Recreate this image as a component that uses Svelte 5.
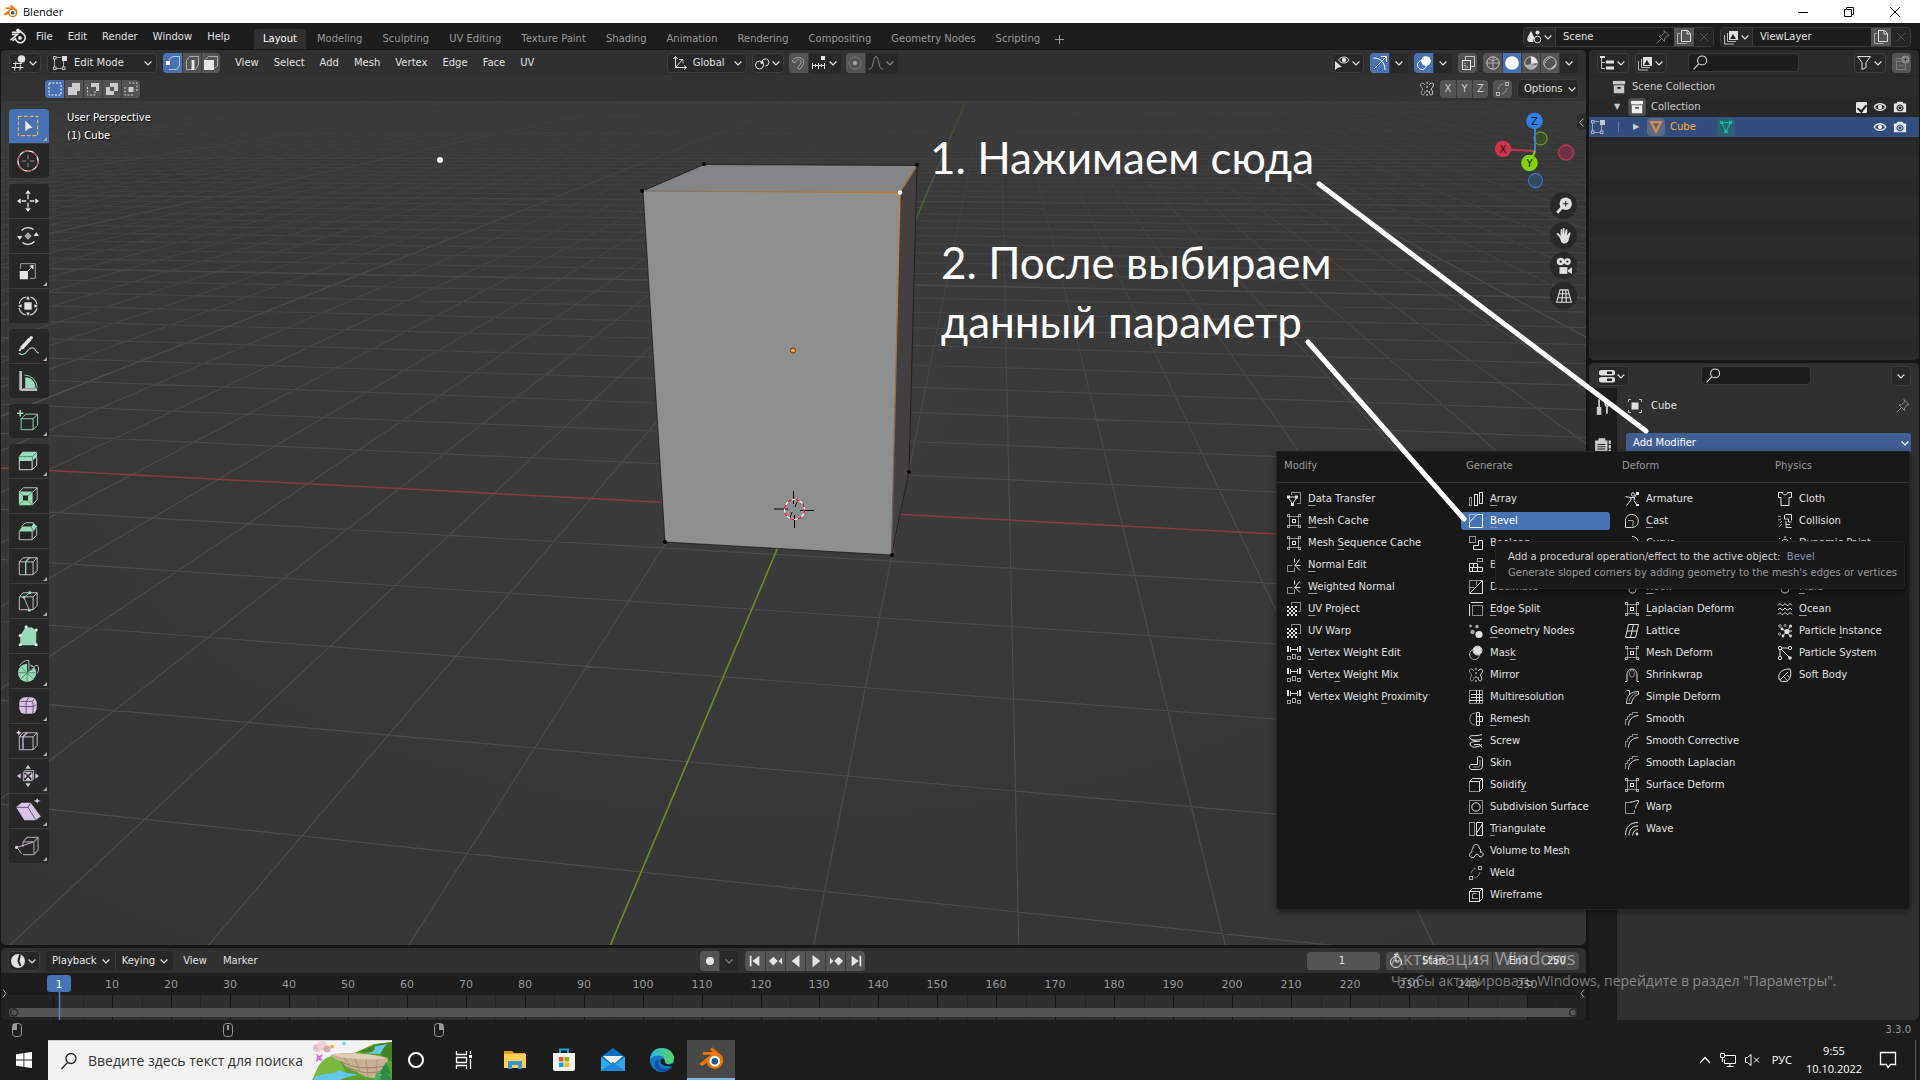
<script>
    // 16px icons, stroke is currentColor, dim parts use opacity
    const sq    = (x, y, w, h = w, o = 1) => `<rect x="${x}" y="${y}" width="${w}" height="${h}" opacity="${o}"/>`;
    const fsq   = (x, y, w, h = w, o = 1) => `<rect x="${x}" y="${y}" width="${w}" height="${h}" opacity="${o}" fill="currentColor" stroke="none"/>`;
    const p     = (d, o = 1) => `<path d="${d}" opacity="${o}"/>`;
    const fp    = (d, o = 1) => `<path d="${d}" opacity="${o}" fill="currentColor" stroke="none"/>`;
    const c     = (x, y, r, o = 1) => `<circle cx="${x}" cy="${y}" r="${r}" opacity="${o}"/>`;
    const fc    = (x, y, r, o = 1) => `<circle cx="${x}" cy="${y}" r="${r}" opacity="${o}" fill="currentColor" stroke="none"/>`;

    const lattice = sq(3.5, 3.5, 9, 9, .6) + sq(1.5, 1.5, 2, 2, .7) + sq(12.5, 1.5, 2, 2, .7) + sq(1.5, 12.5, 2, 2, .7) + sq(12.5, 12.5, 2, 2, .7) + sq(6.5, 6.5, 3);
    const normal  = p('M1.5 8.5v6h7v-4M1.5 8.5h5', .6) + p('M8.5 8.5h6M13.5 2.5 9 8.5l5 5M8.500 1.500v4');
    const uv      = p('M5.5 3.5v-2h9v9h-2', .6) + [0, 1, 2, 3, 4].map(r => [0, 1, 2, 3, 4].filter(k => (k + r) % 2 === 0).map(k => fsq(1 + k * 2, 5 + r * 2, 2)).join('')).join('');
    const weight  = p('M4 4.5h8') + fsq(1, 1, 2, 6) + fsq(4, 2, 1, 5) + fsq(13, 1, 2, 6) + fsq(11, 2, 1, 5) + sq(1.5, 11.5, 3, 3, .7) + sq(6.5, 9.5, 3, 4, .7) + sq(11.5, 11.5, 3, 3, .7);
    const smooth  = p('M1.5 14V8.5h2v-3h2v-2h3v-2H14', .6) + p('M4.5 14.5C4.5 9 8 5 14.5 4.5');
    const merge   = sq(10.5, 1.5, 3, 3, .8) + sq(1.5, 11.5, 3, 3, .8) + p('M3 8.5C4 5 6 3 8 3M7 13c3-1 4-3 5-6', .5);

    const icons = {
        data:      p('M5.5 4V1.5h9v11H11', .6) + p('M2 6h9L6.5 13z') + sq(1.5, 5, 2) + sq(9.5, 5, 2) + fsq(5, 12, 3),
        lattice, normal, uv, weight, smooth,
        array:     sq(1.5, 6.5, 2, 8, .6) + sq(6.5, 3.5, 3, 11) + sq(11.5, 1.5, 3, 11),
        bevel:     p('M1.5 8V1.5H8', .5) + p('M1.5 14.5h13v-13H9L1.5 9z'),
        boolean:   sq(1.5, 1.5, 6, 6, .6) + p('M10.5 5.5h4v9h-9v-4h5z'),
        build:     sq(9.5, 1.5, 5, 3, .7) + p('M1.5 6.5h8v8h-8zM1.5 10.5h13v4h-13M5.5 6.5v4M9.5 10.5v4M4.5 10.5v4'),
        decimate:  p('M1.5 14V1.5H14M1.5 8.5H6M8.5 2v4', .6) + p('M14.5 1.5v13h-13z'),
        edge:      p('M4.5 4.5h10v10h-10z', .6) + p('M3 1.5h12M1.5 3v12'),
        geo:       fc(11, 11.5, 3.6) + fc(4.5, 9, 2.2, .7) + fc(9, 3.5, 1.8, .7) + fc(2.5, 3, 1.5, .6),
        mask:      c(6.5, 9.5, 5, .7) + fc(9.5, 5.5, 4) + c(9.5, 5.5, 4.5),
        mirror:    p('M6 4C4 1 1 2 1.5 4c.3 2 1.5 3 2.5 4-2 2-2.5 6 0 6 1 0 2-2 2-4', .6) + p('M10 4c2-3 5-2 4.5 0-.3 2-1.5 3-2.5 4 2 2 2.5 6 0 6-1 0-2-2-2-4') + p('M8 1v14').replace('/>', ' stroke-dasharray="2 2"/>'),
        multires:  sq(1.5, 1.5, 13, 13, .6) + p('M8.5 1v13M11.5 1v13M1 11.5h14M3 8.5h11M3 5.5h11'),
        remesh:    p('M7 2C0 2 0 14 7 14', .6) + p('M8.5 1.5h3v13h-3zM8.5 5.5h6v5h-6'),
        screw:     p('M1.5 4.5C2 1 7 4 14 1.5M14 6C8 8 2 7 1.5 4.5c0 0 1 3 8 3.5M14 11.5c-5 4-12 3-12-.5 0-3 6-2 10-3M6 11.5h6l2 3'),
        skin:      p('M9.5 2c4-1 5 1 5 3v6c0 3-2 3.5-4 3.5H4c-3 0-4-5 0-5h5.5z') + p('M12 5v5c0 2-1 2-3 2H5', .6),
        solidify:  sq(1.5, 4.5, 10, 10, .6) + p('M1.5 4.5l3-3h10v10l-3 3v-10h-10M11.5 4.5l3-3'),
        subdiv:    sq(1.5, 1.5, 13, 13, .6) + c(8, 8, 4.2),
        triang:    sq(1.5, 1.5, 5, 13, .6) + p('M8.5 1.5h6v13h-6zM8.5 12l6-9'),
        volume:    p('M5 14.5c-5 0-4-5-1-5.5-1-2 1-3 1-4 0-5 7-4 6 0 2 1 2 3 1 4 4 0 4 4 1 5-3 0-2-3-4-3s-2 3.5-4 3.5z'),
        merge,
        wire:      sq(1.5, 4.5, 10, 10) + p('M1.5 4.5l3-3h10v10l-3 3M11.5 4.5l3-3') + p('M4.5 7v5M4 11.5h6M4.5 6.5h4', .7),
        armature:  c(9, 3.5, 1.7) + p('M1.5 5.5l5 1 4 0 2.5-4M7 6v3L2.5 14.5M10.5 6.5 10 9.5l3 5') + fsq(12, 1, 3) + fsq(12, 13, 3, 2),
        cast:      p('M2.5 14.5h5c9 0 9-13 0-13-4 0-6 3-6 6v7z') + p('M4 7.5h5v6', .7),
        curve:     p('M8 1.5c8 0 8 11 0 12H2'),
        hook:      p('M6 9c-4 5 6 8 6 1 0-3-4-3-4-8', 1),
        grid:      p('M4.5 1.5h10l-3 13h-10zM3 8h10.5M9.5 1.5l-3 13'),
        shrink:    p('M1 14.5h2V8c0-8 10-8 10 0v6.5h2') + p('M6 8.5a2.5 3.5 0 1 1 4 0c0 2-4 2-4 0', .6),
        simple:    p('M2.5 1.5h3v4c2-2 5-3 9-3v3c-4 1-6 4-7 9h-5c0-5 2-8 3-9', .9) + p('M5 12C6 8 9 5 13 4', .6),
        warp:      p('M7 3.5H1.5v11h9V11', .6) + p('M6 3c3 1 5-2 8.5-1.5.5 3-3 4-3 8'),
        wave:      p('M1.5 14C1.5 6 6 1.5 14 1.5M5 14.5C5 9 8 5 14 5M8.5 14.5C9 11 11 8.5 14 8.5') + fc(13, 13, 1.4),
        cloth:     p('M5.5 1.5c0 3 5 3 5 0h4v5h-2.5v8h-8v-8H1.5v-5z'),
        collision: p('M8.5 1.5h6v6M7.5 2v4h4v3h3M9 8v6.5h5.5M9 11.5h4') + p('M1 3l3 1M1 7l3-.5M3 10l2-2M2 14l3-3', .7),
        paint:     c(8, 9, 4.5) + fc(8, 10, 2) + p('M2 3l1 1M8 1v2M14 3l-1 1'),
        fluid:     p('M8 2C3 8 3 14 8 14s5-6 0-12z'),
        ocean:     [3.5, 8, 12.5].map(y => p(`M1 ${y + 1}l2-2 2 2h1l2-2 2 2h1l2-2 2 2`)).join(''),
        pinst:     fc(10, 8.5, 2.6) + fc(13.5, 3, 1.5) + fc(5, 6, 1.4) + fc(6, 13, 1.4) + fc(13.5, 13, 1.4) + p('M10 8l4-5M10 8H15M10 9l3 4M9 9l-3 4M9 8 5 6') + c(3, 3, 1.3, .7) + c(2.5, 11, 1.2, .7) + c(8, 2.5, 1, .7),
        psys:      c(3, 3, 1.7) + c(13, 3, 1.7) + c(3, 13, 1.7) + fc(13, 13, 1.8) + p('M5 3h6M3 5v6M4 4l8 8'),
        soft:      p('M3 13.5C0 10 2 1.5 13 2c2 5 0 12-4 12.5-3 0-5 0-6-1zM3 13 11 5') + p('M10 8l3 3M7 10l4 4', .8),

        chev:      p('M3.5 6 8 10.500l4.500-4.500').replace('/>', ' stroke-width="1.600"/>'),
        search:    c(9.5, 6, 4.2) + p('M6.5 9 1.5 14.5'),
        view3d:    p('M2 8.5h9M0.5 12.5h12M5 6.5l-1.5 9M9.5 9.5l-.5 6') + fc(10.5, 4, 3.8),
        edit:      sq(1.5, 1.5, 2.5, 2.5, .8) + sq(1.5, 12, 2.5, 2.5, .8) + sq(10.5, 12, 2.5, 2.5, .8) + p('M2.5 4v8M4 2.5h5M4 13.5h6M11.5 6v6', .7) + fsq(10, 1, 5),
        vsel:      p('M4.5 5.5V4l3-2.500h7v9l-3 4H4', .6) + fsq(1, 6, 4),
        esel:      p('M2.5 5.5l3-4h9v8.5l-3 4.5h-9z', .6) + fsq(7.5, 5, 3, 10),
        fsel:      p('M2.5 4.5l3-3h9v9l-3 3', .6) + fsq(1, 5, 10, 10),
        s1:        sq(2, 2, 12).replace('/>', ' stroke-dasharray="2 1.500"/>'),
        s2:        fp('M6 2h8v8h-3v4H2V6h4z'),
        s3:        fp('M6 2h8v8h-3V6H6z') + p('M2.5 6v8H10v-4').replace('/>', ' stroke-dasharray="2 1.500"/>'),
        s4:        fp('M6 2h8v8h-4v4H2V6h4zM6 6v4h4V6z').replace('/>', ' fill-rule="evenodd"/>'),
        s5:        fsq(5.5, 6, 5) + p('M6 2h8v8M2 6v8h8').replace('/>', ' stroke-dasharray="2 1.500"/>'),
        axes:      p('M3.5 13V2M1.5 4l2-2.5 2 2.5M3 12.5h11M12 10.5l2.5 2-2.5 2M4 12l6-7') + p('M7 4.5h4v4', .8),
        pivot:     c(5.5, 10, 4) + p('M8 6a3.6 3.6 0 1 1 3.5 5') + fc(8, 7.5, 1.5),
        snap:      p('M2 6.5C6-1 16 3 13.5 9L10 14.5 7.5 13 11 8C12 4 7 3 5 8z', .9),
        ticks:     p('M1 10.5h13M1.5 8v6M4.5 9v3M7.5 8v6M10.5 9v3M13.5 8v6') + fsq(10, 1, 4),
        prop:      c(8, 8, 6, .4) + fc(8, 8, 2),
        bell:      p('M1 14.5C6 14 5 1.5 8 1.5s2 12.500 7 13'),
        eyesel:    p('M4.5 5C7 1 13 1 15 5c-2 4-8 4-10.5 0z') + fc(10, 5, 2.2) + fp('M1 6v9l3-2.5 4-.5z'),
        gizmo:     p('M2 14 14 2M9 1.5h5.5V7M1.5 3C9 3 13 8 13 15'),
        overlay:   c(6, 10, 4.5) + fc(10, 6, 4.8),
        xray:      sq(2.5, 5.5, 8, 9) + p('M5.5 5V1.5h9v10H11', .8) + p('M5 8v4h3').replace('/>', ' stroke-dasharray="1 1"/>'),
        wiresh:    c(8, 8, 6.2, .8) + p('M2 8h12M8 2v12M4 4c3 2 5 2 8 0', .6),
        solid:     fc(8, 8, 6.8),
        matsh:     c(8, 8, 6.2, .8) + fp('M8 1.5A6.5 6.5 0 0 1 14.5 8L8 9z') + fp('M8 9l6 1c-2 5-9 5-12 0z', .6),
        rendsh:    c(8, 8, 6.2, .8) + fp('M8 14a6 6 0 0 0 6-6c-2 3-3 4-6 6z') + p('M3.5 8A4.5 4.5 0 0 1 8 3.5', .6),
        scene:     fc(11.5, 3.5, 2) + fp('M5 2l3.5 7c-.5 1-1 1-1 4H3C0 11 1 9 5 2z') + c(11.5, 10.5, 3.3),
        layer:     fsq(6, 2, 9, 9) + p('M4.5 4v8.5H13M1.5 6v9H11', .8) + '<path d="M7 10l3-5 3 5z" fill="#222" stroke="none"/>',
        pin:       p('M9 1.5l5 5-2 .5-2.5 3 0 2.5L4 7l2.5-.3L9.5 4zM6 10l-4.5 4.5'),
        copy:      p('M5.5 1.5h6l3 3v8h-9zM11 2v3h3') + p('M4 4.5H1.5v10h9V14', .6),
        cross:     p('M4 4l8 8M12 4l-8 8'),
        outliner:  p('M2.5 1v12.500H6M2.5 7.5H6', .8) + fsq(1, 1, 5, 2) + fsq(7, 5.5, 8, 3) + fsq(7, 11.5, 8, 3),
        filter:    p('M1.5 1.5h13L10 7.5v5l-4 2v-7z'),
        newcol:    sq(2.5, 6.5, 9, 8, .7) + p('M2 5.5V3.5h6M5 10.5h4', .7) + fc(11.5, 4.5, 4) + '<path d="M9.500 4.500h4M11.500 2.500v4" stroke="#444"/>',
        coll:      fsq(1, 1, 14, 4) + fp('M2 6h12v9H2zM6 8v2h4V8z').replace('/>', ' fill-rule="evenodd"/>'),
        tri:       p('M2.5 2.5h11L8 13.5z').replace('/>', ' stroke-width="2.600"/>'),
        mesh:      p('M3 3h10L8 13z') + sq(1.5, 1.5, 2.5) + sq(12, 1.5, 2.5) + sq(6.8, 12, 2.5),
        eye:       p('M1.5 8C4 3 12 3 14.5 8 12 13 4 13 1.5 8z').replace('/>', ' stroke-width="1.600"/>') + fc(8, 8, 2.5),
        cam:       fp('M1 4h3l1-2h6l1 2h3v10H1zM8 5a4 4 0 1 0 .01 0z').replace('/>', ' fill-rule="evenodd"/>') + c(8, 9, 2.2),
        props:     fp('M3 2h10a3 2.500 0 0 1 0 5.500H3A3 2.500 0 0 1 3 2zM3 9h10a3 2.500 0 0 1 0 5.500H3A3 2.500 0 0 1 3 9z') + '<path d="M8 4.700h5M8 11.700h5" stroke="#222" stroke-width="2.500"/>',
        object:    fsq(4.5, 4.5, 7) + p('M1.5 4V1.5H4M12 1.5h2.5V4M14.5 12v2.5H12M4 14.5H1.5V12', .8),
        tool:      p('M4.5 1v7M10 2v4l1.5 2 1.5-2V2M11.500 8v6').replace('/>', ' stroke-width="1.600"/>') + fsq(2.5, 8, 4, 7),
        render:    fp('M1 4h3V2h6v2h2v11H1zM13 4h2v3h-2zM13 8h2v3h-2zM13 12h2v3h-2z') + '<path d="M3 7.500h7M3 9.500h7M3 11.500h7" stroke="#222"/>',
        time:      fc(8, 8, 7) + '<path d="M10 1.500 8.500 8l2 5" stroke="#222" stroke-width="2"/>',
        rec:       fc(8, 8, 4),
        first:     fsq(2, 2, 2, 12) + fp('M13 2v12L5 8z'),
        prevk:     fp('M15 4v8l-4-4zM0 8l5-5 5 5-5 5z'),
        rev:       fp('M12 1v14L3 8z'),
        play:      fp('M4 1v14l9-7z'),
        nextk:     fp('M1 4v8l4-4zM6 8l5-5 5 5-5 5z'),
        last:      fsq(12, 2, 2, 12) + fp('M3 2v12l8-6z'),
        clock:     c(8, 9, 5.5) + p('M8 9V5M6 1.5h4M8 1v2M8 9h3'),
        zoom:      fc(9.5, 6, 5.5) + p('M6 9.5 2 14').replace('/>', ' stroke-width="2.500"/>') + '<path d="M7 6h5M9.500 3.500v5" stroke="#222"/>',
        hand:      fp('M4 9 1.5 6.5c0-1.5 1-1.5 2-.5L5 8V2.5c0-1 1.5-1 1.5 0V7l.5-5.5c.2-1 1.5-1 1.5 0V7L9.5 2.5c.5-1 1.5-.5 1.5.5L10.7 7.5 12.5 5c1-1 1.5 0 1.3.8L12 12c-1 3-5 3.5-6.5 1z'),
        camera:    fc(5, 4, 3.4) + fc(11, 4, 3) + fsq(4, 9, 7, 6) + fp('M11.5 11.5 15 9v6l-3.5-2z') + '<circle cx="5" cy="4" r="1" fill="#222" stroke="none"/><circle cx="11" cy="4" r="1" fill="#222" stroke="none"/>',
        persp:     p('M4.5 2.5h7l3 11h-13zM3.5 6h9M2.5 9.5h11M7 2.5 6 13.5M9.5 2.5l.5 11'),
        mouseL:    sq(3.5, 1.5, 9, 13).replace('/>', ' rx="3"/>') + fp('M4 2h4v6H4z'),
        mouseM:    sq(3.5, 1.5, 9, 13).replace('/>', ' rx="3"/>') + fsq(7, 3, 2, 5),
        mouseR:    sq(3.5, 1.5, 9, 13).replace('/>', ' rx="3"/>') + fp('M8 2h4v6H8z'),
    };

    // toolbar icons, 24px; g = green, m = mauve
    const g = '#96dbb5', m = '#d8c2e8', w = '#e6e6e6';
    const ln   = (d, col = w, sw = 1) => `<path d="${d}" fill="none" stroke="${col}" stroke-width="${sw}"/>`;
    const fl   = (d, col = w) => `<path d="${d}" fill="${col}"/>`;
    const box  = (col = '#ccc') => ln('M2.5 7.5h15v14h-15zM2.5 7.5l4-4.5h15.5l-4.5 4.5M22 3v14l-4.5 4.5', col);
    const dot  = (x, y, r, col) => `<circle cx="${x}" cy="${y}" r="${r}" fill="${col}"/>`;
    const arrows = (col) => fl('M12 0l3 4H9zM12 24l3-4H9zM0 12l4-3v6zM24 12l-4-3v6z', col);

    const tools = [
        [
            { n: 'Select Box', on: true, more: true, s: '<rect x="1.500" y="1.500" width="21" height="21" fill="none" stroke="#ffb040" stroke-width="1.200" stroke-dasharray="4 2.200"/>' + fl('M9 6v12l3-3 5-1z') },
            { n: 'Cursor', s: '<circle cx="12" cy="12" r="11" fill="none" stroke="#e6e6e6" stroke-width="1.400"/><circle cx="12" cy="12" r="11" fill="none" stroke="#b8404a" stroke-width="1.400" stroke-dasharray="6.500 5"/>' + ln('M12 5v5M12 14v5M5 12h5M14 12h5', '#999') },
        ],
        [
            { n: 'Move', s: arrows(w) + ln('M12 5v5M12 14v5M5 12h5M14 12h5', w, 1.4) },
            { n: 'Rotate', s: ln('M5 6a9.5 9.5 0 0 1 13-1M19 18a9.5 9.5 0 0 1-13 1', w, 1.4) + fl('M0 12h6l-3 4zM24 12h-6l3-4z') + fl('M12 8l4 4-4 4-4-4z', '#aaa') },
            { n: 'Scale', more: true, s: ln('M4 10V4h16v16h-6', '#aaa') + `<rect x="3" y="12" width="9" height="9" fill="${w}"/>` + ln('M12 12l5-5') + fl('M18 5.5v5l-4.5-4.5z') },
            { n: 'Transform', s: '<circle cx="12" cy="12" r="10" fill="none" stroke="#ccc" stroke-width="1.300" stroke-dasharray="11 4.700" stroke-dashoffset="-2.500"/><rect x="8" y="8" width="8" height="8" fill="#e6e6e6"/>' + fl('M12 1l2 4h-4zM12 23l2-4h-4zM1 12l4-2v4zM23 12l-4-2v4z') },
        ],
        [
            { n: 'Annotate', more: true, s: ln('M2 20c8 5 9-7 15-6 4 1 3 5 7 6', g, 1.2) + ln('M2.5 17.5 5 14', w, 2) + ln('M5 14.5 14.5 4', w, 4) + dot(15.5, 3, 1.8, w) },
            { n: 'Measure', s: fl('M9 20V8a11 11 0 0 1 11 12z', g) + ln('M8 5.5a14 14 0 0 1 14 14', g) + ln('M4 1v21', '#bbb', 3) + ln('M4 21.5h18', '#bbb', 3) + ln('M6 2v19', '#282828', 1).replace('/>', ' stroke-dasharray="1 1.500"/>') },
        ],
        [
            { n: 'Add Cube', more: true, s: ln('M4.5 9.5h13v12h-13zM4.5 9.5l5-5h13l-5 5M22.5 4.5v12l-5 5', g) + ln('M3.5 0v7M0 3.5h7', g, 1.8) },
        ],
        [
            { n: 'Extrude Region', more: true, s: ln('M2.5 12v9.500h14V12M16.5 21.5l5-5V8', w) + fl('M2 7l4-5h16l-5 5v5H2zM17 7l5-5v5l-5 5z', g) + ln('M2 7h15l5-5M17 7v5', '#4f8a69') },
            { n: 'Inset Faces', s: ln('M2.5 7.5 7 3h15v13l-5 5.5M17.5 7.5 22 3', '#ccc') + fl('M2 7h15v15H2zM6.5 11.5v5.500H12v-5.500z', g).replace('/>', ' fill-rule="evenodd"/>') + ln('M2 7l5 5M17 7l-5 5M2 22l5-5M17 22l-5-5', '#4f8a69') },
            { n: 'Bevel', s: ln('M2.5 12.5v9h14v-9M16.5 21.5l5-5V9M5 7l4-4h9', '#ccc') + fl('M2 12.5 5.5 7H16l2-4 4 4-4 5.5z', g) + ln('M5.5 7H15l3 5', '#4f8a69') },
            { n: 'Loop Cut', more: true, s: box() + ln('M9.5 21.5v-14L13.5 3', g, 1.4) },
            { n: 'Knife', more: true, s: box() + ln('M14 3 7.5 8 13.5 22', g) + dot(14, 3, 1.6, g) + dot(7.5, 8, 1.6, g) + dot(13.5, 22, 1.6, g) },
            { n: 'Poly Build', s: fl('M3.5 22V11.5L9 3l7-.5 5 3.5v16z', g) + dot(10, 2, 1.7, w) + dot(21, 5.5, 1.7, w) + dot(3.5, 11.5, 1.7, w) + dot(3.5, 21.5, 1.7, w) + dot(21, 21.5, 1.7, w) },
            { n: 'Spin', more: true, s: dot(11, 14, 10, g) + fl('M11 14V3h3l1 4 5 1z', '#272727') + ln('M3 6c2-4 7-6 10-5.500v11M17 11c2-6 7-8 6.500 0-.5 2-1 3-2 4', '#ccc') + ln('M11 14H1M11 14h10M11 14v10M11 14l-7-7M11 14l-7 7M11 14l7 7M11 14l7-6', '#4f8a69') },
            { n: 'Smooth', more: true, s: '<rect x="2.500" y="2.500" width="19" height="18" rx="6" fill="#d8c2e8"/>' + ln('M3 12.5h15l3-2M10 7v13M4 7h13c1 4 1 9 0 13M17 7l2-3M10 7l3-4', '#5c4a6b') },
            { n: 'Edge Slide', more: true, s: box() + ln('M6.5 21V7.5L11 3', m, 1.4) + fl('M2 0l1 2 2 1-2 1-1 2-1-2-2-1 2-1z', m) },
            { n: 'Shrink/Fatten', more: true, s: ln('M7 8h9v9H7zM7 8l2-2h9v9l-2 2', '#999', 1.3) + arrows(m) + fl('M12 11l-3-3h6zM12 13l-3 4h6zM11 12l-3-3v6zM13 12l4-3v6z', m) },
            { n: 'Shear', more: true, s: fl('M-1 8l6-5h10l11 15-6 4H8z', m) + ln('M-1 8h13l8 13M12 8l3-5', '#5c4a6b') + fl('M22-2l1 2 3 1-3 1-1 2-1-2-3-1 3-1z', m) },
            { n: 'Rip Region', more: true, s: ln('M6.5 7.5h12v14h-12M6.5 13V7.5l4.5-5h12v14l-4.5 5M18.5 7.5l4.5-5', '#999', 1.3) + ln('M0 13.5 17 8M0 13.5l5 7', m) + dot(-.5, 13.5, 1.7, m) },
        ],
    ];

    // '_' marks the underlined letter
    const columns = [
        { title: 'Modify', items: [
            ['data', '_Data Transfer'], ['lattice', '_Mesh Cache'], ['lattice', 'Mesh _Sequence Cache'],
            ['normal', '_Normal Edit'], ['normal', '_Weighted Normal'], ['uv', '_UV Project'], ['uv', 'UV Warp'],
            ['weight', '_Vertex Weight Edit'], ['weight', 'Verte_x Weight Mix'], ['weight', 'Vertex Weight _Proximity'] ] },
        { title: 'Generate', items: [
            ['array', '_Array'], ['bevel', '_Bevel'], ['boolean', 'Boolean'], ['build', 'Build'], ['decimate', 'Decimate'],
            ['edge', '_Edge Split'], ['geo', '_Geometry Nodes'], ['mask', 'Mas_k'], ['mirror', 'Mirror'],
            ['multires', 'Multiresolution'], ['remesh', '_Remesh'], ['screw', 'Screw'], ['skin', 'Skin'],
            ['solidify', 'Solidif_y'], ['subdiv', 'Subdivision Surface'], ['triang', '_Triangulate'],
            ['volume', 'Volume to Mesh'], ['merge', 'Weld'], ['wire', 'Wireframe'] ] },
        { title: 'Deform', items: [
            ['armature', 'Armature'], ['cast', '_Cast'], ['curve', 'Curve'], ['lattice', 'Displace'], ['hook', '_Hook'],
            ['lattice', '_Laplacian Deform'], ['grid', 'Lattice'], ['lattice', 'Mesh Deform'], ['shrink', 'Shrinkwrap'],
            ['simple', 'Simple Deform'], ['smooth', 'Smooth'], ['smooth', 'Smooth Corrective'],
            ['smooth', 'Smooth Laplacian'], ['lattice', 'Surface Deform'], ['warp', 'Warp'], ['wave', 'Wave'] ] },
        { title: 'Physics', items: [
            ['cloth', 'Cloth'], ['collision', 'Collision'], ['paint', 'Dynamic Paint'], ['pinst', 'Explode'],
            ['fluid', '_Fluid'], ['ocean', '_Ocean'], ['pinst', 'Particle _Instance'], ['psys', 'Particle System'],
            ['soft', 'Soft Body'] ] },
    ];

    const tabs = ['Layout', 'Modeling', 'Sculpting', 'UV Editing', 'Texture Paint', 'Shading', 'Animation', 'Rendering', 'Compositing', 'Geometry Nodes', 'Scripting'];

    // floor grid: origin plus the two vanishing points of the X and Y axes
    const O = [793, 509], VX = [-6162, 150], VY = [998, 22];
    const A = 1 / 66.5, B = 1 / 11.707;
    function project(u, v) {
        const k = 1 + A * u + B * v;
        return [0, 1].map(i => ((O[i] + A * u * VX[i] + B * v * VY[i]) / k).toFixed(1));
    }
    function seg(a, b) { return 'M' + project(...a).join(' ') + 'L' + project(...b).join(' '); }
    const grid = [], major = [];
    for (let n = -50; n <= 60; n++) {
        if (n === 0) continue;
        const near = (.25 - 1 - A * n) / B;
        (n % 10 ? grid : major).push(seg([n, near], [n, 200]));
    }
    for (let n = -8; n <= 70; n++) {
        if (n === 0) continue;
        const right = Math.max(-60, (.1 - 1 - B * n) / A);
        (n % 10 ? grid : major).push(seg([right, n], [90, n]));
    }

    const FRAME = 5.895;
    const frameX = f => Math.round(58 + (f - 1) * FRAME);
    const marks = Array.from({ length: 52 }, (_, i) => i * 5);

    let current = $state(1), start = $state(1), end = $state(250);
    let tab = $state('Layout');
    let active = $state('Bevel');
</script>


{#snippet ic(name, size = 16)}
    <svg class="ic" width={size} height={size} viewBox="0 0 16 16" aria-hidden="true">{@html icons[name]}</svg>
{/snippet}

{#snippet drop(name, label)}
    <button class="drop" aria-label={label}>{@render ic(name)}{@render ic('chev', 12)}</button>
{/snippet}

{#snippet blender(size)}
    <svg width={size} height={size} viewBox="0 0 24 24" aria-hidden="true">
        <path d="M1 16.500 12 8H4.500V5.500h9L11 3l2-1.800 9 7.800a7.800 7.800 0 1 1-14 6.500l-4 3z" fill="#ea7600"/>
        <circle cx="15.500" cy="14" r="5" fill="#fff"/><circle cx="15.500" cy="14" r="3" fill="#265787"/>
    </svg>
{/snippet}


<div class="desktop">
    <header class="title">
        {@render blender(15)}
        <span>Blender</span>
        <div class="winbtns">
            <button aria-label="Minimize"><svg width="10" height="10"><path d="M0 5.500h10"/></svg></button>
            <button aria-label="Restore"><svg width="10" height="10"><path d="M.5 2.500h7v7h-7zM2.500 2V.5h7v7H8"/></svg></button>
            <button aria-label="Close"><svg width="10" height="10"><path d="M0 0l10 10M10 0 0 10"/></svg></button>
        </div>
    </header>

    <nav class="topbar">
        <svg class="logo" width="17" height="17" viewBox="0 0 24 24" aria-hidden="true">
            <path d="M2 17 12 9H4M4 6h10l-3-3 2-1 8 7a7 7 0 1 1-12 6l-4 3" fill="none" stroke="#e6e6e6" stroke-width="2.200"/><circle cx="15.500" cy="14" r="2.600" fill="#e6e6e6"/>
        </svg>
        <div class="menus">
            {#each ['File', 'Edit', 'Render', 'Window', 'Help'] as x}<button>{x}</button>{/each}
        </div>
        <div class="tabs">
            {#each tabs as t}<button class:on={t === tab} onclick={() => tab = t}>{t}</button>{/each}
            <button class="plus" aria-label="Add workspace"><svg width="9" height="9"><path d="M4.500 0v9M0 4.500h9" stroke="#999"/></svg></button>
        </div>
        <div class="ids">
            <div class="id">
                {@render drop('scene', 'Browse scene')}
                <input aria-label="Scene name" value="Scene">
                <span class="pin">{@render ic('pin')}</span>
                <button class="lt" aria-label="New scene">{@render ic('copy')}</button>
                <button class="x" aria-label="Delete scene">{@render ic('cross')}</button>
            </div>
            <div class="id">
                {@render drop('layer', 'Browse view layer')}
                <input aria-label="View layer name" value="ViewLayer">
                <button class="lt" aria-label="New view layer">{@render ic('copy')}</button>
                <button class="x" aria-label="Remove view layer">{@render ic('cross')}</button>
            </div>
        </div>
    </nav>

    <main>
        <div class="left">
            <section class="view3d">
                <svg class="scene" viewBox="0 50 1585 895" preserveAspectRatio="xMidYMid slice" aria-label="3D viewport">
                    <defs>
                        <radialGradient id="bg" cx=".5" cy=".4" r=".7"><stop offset="0" stop-color="#3d3d3d"/><stop offset="1" stop-color="#353535"/></radialGradient>
                        <linearGradient id="far" x1="0" y1="60" x2="0" y2="500" gradientUnits="userSpaceOnUse">
                            <stop offset="0" stop-color="#fff" stop-opacity="0"/><stop offset=".15" stop-color="#fff" stop-opacity=".2"/>
                            <stop offset=".5" stop-color="#fff" stop-opacity=".6"/><stop offset="1" stop-color="#fff"/>
                        </linearGradient>
                        <mask id="fade" maskUnits="userSpaceOnUse" x="0" y="50" width="1585" height="900"><rect y="50" width="1585" height="900" fill="url(#far)"/></mask>
                        <linearGradient id="edge" x1="642" y1="0" x2="899" y2="0" gradientUnits="userSpaceOnUse"><stop offset="0" stop-color="#777"/><stop offset="1" stop-color="#c87a1e"/></linearGradient>
                        <linearGradient id="edgeV" x1="0" y1="192" x2="0" y2="555" gradientUnits="userSpaceOnUse"><stop offset="0" stop-color="#d08a36"/><stop offset="1" stop-color="#6b5646"/></linearGradient>
                    </defs>
                    <rect y="50" width="1585" height="895" fill="url(#bg)"/>
                    <g mask="url(#fade)" fill="none">
                        <path d={grid.join('')} stroke="#4c4c4c" stroke-width="1.200"/>
                        <path d={major.join('')} stroke="#555" stroke-width="1.500"/>
                    </g>
                    <path d={seg([90, 0], [-60, 0])} stroke="#8c3844" stroke-width="1.500"/>
                    <g mask="url(#fade)"><path d={seg([0, -7], [0, 70])} stroke="#668f26" stroke-width="1.600"/></g>
                    <path d="M899 192.500 916 165.500 908 472 890.500 555z" fill="#444041"/>
                    <path d="M642 191 703 164.500 916 165.500 899 192.500z" fill="#848586"/>
                    <path d="M642 191 899 192.500 890.500 555 664 542z" fill="#8e9090"/>
                    <path d="M703 164.500 916 165.500M642 191 703 164.500M916 165.500 908 472 890.500 555 664 542 642 191" fill="none" stroke="#1c1c1c" stroke-width="1" opacity=".8"/>
                    <path d="M642 191 899 192.500" stroke="url(#edge)" stroke-width="1.300"/>
                    <path d="M899 192.500 890.500 555" stroke="url(#edgeV)" stroke-width="1.300"/>
                    <path d="M899 192.500 916 165.500" stroke="#a87038" stroke-width="1.300"/>
                    {#each [[641, 191], [703, 164], [916, 165], [908, 472], [891, 555], [664, 542]] as [x, y]}
                        <circle cx={x} cy={y} r="2" fill="#000"/>
                    {/each}
                    <circle cx="899" cy="192.500" r="2.200" fill="#fff"/>
                    <circle cx="792" cy="350.500" r="2.500" fill="#ffa030" stroke="#5a3c14"/>
                    <path d="M792.500 491v13M793.500 515v13M773 509h14M799 510.500h14M796 502l-2 5M791 512l-2 6" stroke="#000"/>
                    <circle cx="793.500" cy="509.500" r="10" fill="none" stroke="#fff" stroke-width="1.200"/>
                    <circle cx="793.500" cy="509.500" r="10" fill="none" stroke="#e00000" stroke-width="1.200" stroke-dasharray="4 4"/>
                </svg>

                <div class="hdr">
                    {@render drop('view3d', 'Editor type')}
                    <label class="dd mode">{@render ic('edit')}<select aria-label="Mode"><option>Edit Mode</option></select>{@render ic('chev', 12)}</label>
                    <div class="seg">
                        <button class="on" aria-label="Vertex select">{@render ic('vsel')}</button>
                        <button aria-label="Edge select">{@render ic('esel')}</button>
                        <button aria-label="Face select">{@render ic('fsel')}</button>
                    </div>
                    <div class="menus">
                        {#each ['View', 'Select', 'Add', 'Mesh', 'Vertex', 'Edge', 'Face', 'UV'] as x}<button>{x}</button>{/each}
                    </div>
                    <div class="mid">
                        <label class="dd orient">{@render ic('axes')}<select aria-label="Transform orientation"><option>Global</option></select>{@render ic('chev', 12)}</label>
                        {@render drop('pivot', 'Pivot point')}
                        <div class="seg dark">
                            <button class="lt" aria-label="Snap">{@render ic('snap')}</button>
                            <button class="wide" aria-label="Snap to">{@render ic('ticks')}{@render ic('chev', 12)}</button>
                        </div>
                        <div class="seg dark">
                            <button class="lt" aria-label="Proportional editing">{@render ic('prop')}</button>
                            <button class="wide off" aria-label="Falloff">{@render ic('bell')}{@render ic('chev', 12)}</button>
                        </div>
                    </div>
                    <div class="end">
                        {@render drop('eyesel', 'Object visibility')}
                        <div class="seg dark"><button class="on" aria-label="Gizmos">{@render ic('gizmo')}</button><button aria-label="Gizmo options">{@render ic('chev', 12)}</button></div>
                        <div class="seg dark"><button class="on" aria-label="Overlays">{@render ic('overlay')}</button><button aria-label="Overlay options">{@render ic('chev', 12)}</button></div>
                        <div class="seg"><button aria-label="X-ray">{@render ic('xray')}</button></div>
                        <div class="seg">
                            <button aria-label="Wireframe">{@render ic('wiresh')}</button>
                            <button class="on" aria-label="Solid">{@render ic('solid')}</button>
                            <button aria-label="Material preview">{@render ic('matsh')}</button>
                            <button aria-label="Rendered">{@render ic('rendsh')}</button>
                            <button class="dk" aria-label="Shading options">{@render ic('chev', 12)}</button>
                        </div>
                    </div>
                </div>

                <div class="hdr sub">
                    <div class="seg">
                        {#each ['Set', 'Extend', 'Subtract', 'Invert', 'Intersect'] as n, i}
                            <button class:on={i === 0} aria-label={n}>{@render ic('s' + (i + 1))}</button>
                        {/each}
                    </div>
                    <div class="end">
                        {@render ic('mirror')}
                        <div class="seg xyz"><button>X</button><button>Y</button><button>Z</button></div>
                        <div class="seg"><button class="off" aria-label="Auto merge">{@render ic('merge')}</button></div>
                        <button class="drop opts">Options {@render ic('chev', 12)}</button>
                    </div>
                </div>

                <div class="tools">
                    {#each tools as group}
                        <div class="group">
                            {#each group as t}
                                <button class:on={t.on} class:more={t.more} aria-label={t.n}>
                                    <svg width="22" height="22" viewBox="0 0 24 24" aria-hidden="true">{@html t.s}</svg>
                                </button>
                            {/each}
                        </div>
                    {/each}
                </div>

                <div class="info">User Perspective<br>(1) Cube</div>

                <svg class="axes" width="84" height="84" viewBox="1494 108 84 84" aria-label="Orientation gizmo">
                    <circle cx="1540.500" cy="138.500" r="6.500" fill="#3f4a28" stroke="#6b9423" stroke-width="1.300"/>
                    <circle cx="1566" cy="152.500" r="7.500" fill="#6b3440" stroke="#c4334a" stroke-width="1.300"/>
                    <circle cx="1535.500" cy="180.500" r="7" fill="#36495f" stroke="#3474be" stroke-width="1.300"/>
                    <path d="M1535 151 1504 149.500" stroke="#c4334a" stroke-width="2"/>
                    <path d="M1535 151 1530 163" stroke="#84d40a" stroke-width="2"/>
                    <path d="M1535 151V122" stroke="#2e83e6" stroke-width="2"/>
                    <circle cx="1534.500" cy="121" r="8.300" fill="#2e83e6"/><circle cx="1503" cy="149" r="8.300" fill="#d0344c"/><circle cx="1529.500" cy="163" r="8.300" fill="#84d40a"/>
                    <text x="1534.500" y="125">Z</text><text x="1503" y="153">X</text><text x="1529.500" y="167">Y</text>
                </svg>
                <div class="navbtns">
                    {#each [['zoom', 'Zoom'], ['hand', 'Pan'], ['camera', 'Camera view'], ['persp', 'Toggle perspective']] as [k, n]}
                        <button aria-label={n}>{@render ic(k, 18)}</button>
                    {/each}
                </div>
                <button class="flap" aria-label="Show sidebar"><svg width="5" height="9"><path d="M4.500.5l-4 4 4 4" stroke="#aaa" fill="none"/></svg></button>
            </section>

            <section class="timeline">
                <div class="hdr">
                    {@render drop('time', 'Timeline')}
                    <div class="seg dark">
                        <button class="txt">Playback {@render ic('chev', 12)}</button>
                        <button class="txt">Keying {@render ic('chev', 12)}</button>
                    </div>
                    <div class="menus"><button>View</button><button>Marker</button></div>
                    <div class="mid">
                        <div class="seg dark"><button class="lt rec" aria-label="Auto keying">{@render ic('rec')}</button><button class="off" aria-label="Keying options">{@render ic('chev', 12)}</button></div>
                        <div class="seg play">
                            {#each ['first', 'prevk', 'rev', 'play', 'nextk', 'last'] as k}<button aria-label={k}>{@render ic(k, 14)}</button>{/each}
                        </div>
                    </div>
                    <div class="end">
                        <input class="num cur" aria-label="Current frame" bind:value={current}>
                        <div class="range">
                            <button aria-label="Use preview range">{@render ic('clock')}</button>
                            <label><span>Start</span><input class="num" bind:value={start}></label>
                            <label><span>End</span><input class="num" bind:value={end}></label>
                        </div>
                    </div>
                </div>
                <svg class="ruler" viewBox="0 0 1585 48" preserveAspectRatio="xMinYMin slice" aria-label="Frames">
                    <rect width="1585" height="22" fill="#1d1d1d"/>
                    <rect y="22" width="1585" height="26" fill="#232323"/>
                    <rect x={frameX(1)} y="22" width={frameX(250) - frameX(1)} height="26" fill="#2f2f2f"/>
                    {#each marks as f}
                        <path d="M{frameX(f) + .5} 22v26" stroke={f % 10 ? '#262626' : '#171717'}/>
                        {#if f && f % 10 === 0}<text x={frameX(f)} y="15">{f}</text>{/if}
                    {/each}
                    <rect x="8" y="35" width="1568" height="9" rx="4" fill="#545454"/>
                    <circle cx="13" cy="39.500" r="3.500" fill="none" stroke="#2a2a2a" stroke-width="1.500"/><circle cx="1572" cy="39.500" r="3.500" fill="none" stroke="#2a2a2a" stroke-width="1.500"/>
                    <path d="M58.500 18v30" stroke="#5580c4" stroke-width="1.500"/>
                    <rect x="46" y="2" width="24" height="17" rx="3" fill="#4772b3"/>
                    <text x="58" y="15" class="now">{current}</text>
                    <path d="M2 16.500l3 4-3 4M1583 16.500l-3 4 3 4" stroke="#aaa" fill="none"/>
                </svg>
            </section>
        </div>

        <div class="right">
            <section class="outliner">
                <div class="hdr">
                    {@render drop('outliner', 'Editor type')}
                    {@render drop('layer', 'Display mode')}
                    <label class="find">{@render ic('search', 17)}<input type="search" aria-label="Filter"></label>
                    <div class="end">
                        {@render drop('filter', 'Filter options')}
                        <div class="seg"><button class="off" aria-label="New collection">{@render ic('newcol')}</button></div>
                    </div>
                </div>
                <ul>
                    <li class="d0">{@render ic('coll', 14)}<span>Scene Collection</span></li>
                    <li class="d1"><i class="tw">▼</i><b class="chip">{@render ic('coll', 14)}</b><span>Collection</span>
                        <div class="end"><input type="checkbox" checked aria-label="Exclude collection">{@render ic('eye', 14)}{@render ic('cam', 14)}</div></li>
                    <li class="d2 sel">{@render ic('edit')}<i class="guide"></i><i class="tw">▶</i><b class="chip or">{@render ic('tri', 14)}</b><span>Cube</span><b class="chip gr">{@render ic('mesh', 14)}</b>
                        <div class="end">{@render ic('eye', 14)}{@render ic('cam', 14)}</div></li>
                </ul>
            </section>

            <section class="props">
                <div class="hdr">
                    {@render drop('props', 'Editor type')}
                    <label class="find">{@render ic('search', 17)}<input type="search" aria-label="Search properties"></label>
                    <div class="end"><button class="drop one" aria-label="Options">{@render ic('chev', 12)}</button></div>
                </div>
                <div class="body">
                    <div class="ptabs"><button aria-label="Tool">{@render ic('tool', 18)}</button><button aria-label="Render">{@render ic('render', 18)}</button></div>
                    <div class="panel">
                        <div class="crumb">{@render ic('object')}<span>Cube</span><div class="end">{@render ic('pin')}</div></div>
                        <button class="addmod">Add Modifier {@render ic('chev', 12)}</button>
                    </div>
                </div>
            </section>
        </div>
    </main>

    <footer class="status">
        <span>{@render ic('mouseL')}</span><span>{@render ic('mouseM')}</span><span>{@render ic('mouseR')}</span>
        <em>3.3.0</em>
    </footer>

    <footer class="taskbar">
        <button class="win" aria-label="Start"><svg width="16" height="16"><path d="M0 2.300 7.500 1.200V7.600H0zM8.300 1.100 16 0v7.600H8.300zM0 8.400h7.500v6.400L0 13.700zM8.300 8.400H16V16l-7.700-1.100z" fill="#fff"/></svg></button>
        <label class="wsearch">
            <svg width="18" height="18" viewBox="0 0 18 18"><circle cx="11" cy="6.500" r="5" fill="none" stroke="#222" stroke-width="1.300"/><path d="M7.500 10.500 1.500 17" stroke="#222" stroke-width="1.300"/></svg>
            <input aria-label="Поиск" placeholder="Введите здесь текст для поиска">
            <svg class="art" width="80" height="40" viewBox="0 0 80 40" aria-hidden="true">
                <path d="M12 40C14 24 26 12 40 14L62 4l18-2v38z" fill="#5aa02c"/>
                <path d="M48 12 66 4l14-2v20l-12-8z" fill="#3f8420"/>
                <path d="M52 13c10 0 12-4 10-6 4-2 10-2 14-3-6 3-4 6-8 10z" fill="#6cc8ef"/>
                <path d="M2 36c4-10 8-18 18-20 8 4 12 10 14 18L20 40H0z" fill="#78b83e"/>
                <path d="M18 15c16-4 44-1 58 3-2 10-4 16-11 20-10 0-14-2-20-6-8-3-10-4-15-10-6-2-8-4-12-7z" fill="#c9b195"/>
                <path d="M20 15c16-3 40-1 54 3-14 2-36 2-54-3z" fill="#e0cfb8"/>
                <path d="M30 22c12 7 28 7 43 4M36 27c10 6 22 7 35 4" fill="none" stroke="#9c8067"/>
                <path d="M32 18l7 8M43 19l5 13M54 20l2 17M65 20l-1 17" stroke="#ad9277"/>
                <path d="M2 38c8-6 20-3 26-8 4 4 14 3 18 5-8 1-14 3-18 5H2z" fill="#62c6f2"/>
                <path d="M74 22l5 12h-3l4 6H66l4-6h-3z" fill="#2c8a4a"/><path d="M66 30l3 10h-7z" fill="#46b06a"/>
                <circle cx="5" cy="8" r="4" fill="#e9c3c8"/><circle cx="10" cy="6" r="5" fill="#f1d3d6"/><circle cx="15" cy="9" r="3.500" fill="#d9a7b0"/>
                <circle cx="20" cy="6.500" r="1.800" fill="#f5a623"/><circle cx="32" cy="3.500" r="2" fill="#7fd0e8"/><path d="M4 13l3 3 4-2-2 4 2 3-4-1-3 2 1-5z" fill="#d66be0"/>
            </svg>
        </label>
        <button aria-label="Cortana"><svg width="18" height="18"><circle cx="9" cy="9" r="7" fill="none" stroke="#fff" stroke-width="2"/></svg></button>
        <button aria-label="Task view"><svg width="18" height="18"><path d="M1.500 0v3.500h10V0M1.500 18v-3.500h10V18M1.500 6.500h10v5h-10zM15.500 0v3M15.500 8v10" fill="none" stroke="#fff" stroke-width="1.300"/><path d="M14 4h3v3h-3z" fill="#fff"/></svg></button>
        <div class="apps">
            <button aria-label="Explorer"><svg width="24" height="24"><path d="M1 3h8l2 2h11v4H1z" fill="#e0a10e"/><path d="M1 6h22v14H1z" fill="#ffd257"/><path d="M5 21v-8h14v8h-4v-4H9v4z" fill="#3e8fd8"/></svg></button>
            <button aria-label="Store"><svg width="24" height="24"><path d="M8 6V1.500h8V6" fill="none" stroke="#1ba1e2" stroke-width="2"/><path d="M1 5h22v16a2 2 0 0 1-2 2H3a2 2 0 0 1-2-2z" fill="#f4f4f4"/><path d="M7 9h4.500v4.500H7z" fill="#f25022"/><path d="M12.500 9H17v4.500h-4.500z" fill="#7fba00"/><path d="M7 14.500h4.500V19H7z" fill="#00a4ef"/><path d="M12.500 14.500H17V19h-4.500z" fill="#ffb900"/></svg></button>
            <button aria-label="Mail"><svg width="26" height="24"><path d="M1 9 13 0l12 9v14H1z" fill="#0a6fc2"/><path d="M3 8h20l-10 9z" fill="#f2f2f2"/><path d="M1 9l12 9 12-9v14H1z" fill="#33a8ee"/><path d="M1 23l12-9 12 9z" fill="#1b8ada"/></svg></button>
            <button aria-label="Edge">
                <svg width="24" height="24"><defs><linearGradient id="eg"><stop offset="0" stop-color="#2bb5e8"/><stop offset="1" stop-color="#5bd65a"/></linearGradient></defs>
                    <circle cx="12" cy="12" r="12" fill="#1478c8"/><path d="M0 11C1 3 6 0 12 0c7 0 12 5 12 10 0 4-3 6-6 6-4 0-4-1-3-3 0-6-9-8-15-2z" fill="url(#eg)"/><path d="M9 12c-3 6 3 11 13 7-5 7-15 5-17-1-1-4 1-7 4-6z" fill="#0d4f9e"/><path d="M11 11c-2 5 2 8 12 7l1-3c-3 2-9 2-9-1 0-2-2-4-4-3z" fill="#1c1c1c"/></svg>
            </button>
            <button class="run" aria-label="Blender">{@render blender(26)}</button>
        </div>
        <div class="tray">
            <svg width="12" height="8"><path d="M1 7l5-5.500L11 7" fill="none" stroke="#fff" stroke-width="1.200"/></svg>
            <svg width="16" height="14"><path d="M4.500 2.500h11v8h-11v-4M10 11v2.500M6.500 13.500h7M.5.500h4v4h-4zM2.500 5v4" fill="none" stroke="#fff"/></svg>
            <svg width="15" height="14"><path d="M.5 4.500h2L6 1.500v11L2.500 9.500h-2zM9 4.500l5 5M14 4.500l-5 5" fill="none" stroke="#fff"/></svg>
            <span>РУС</span>
            <time>9:55<br>10.10.2022</time>
            <svg width="18" height="18"><path d="M1.500 1.500h15v12h-5L9 16.500l-1.500-3h-6z" fill="none" stroke="#fff" stroke-width="1.300"/></svg>
            <i></i>
        </div>
    </footer>

    <div class="popup" role="menu">
        {#each columns as col}
            <div class="col">
                <h4>{col.title}</h4>
                {#each col.items as [k, label]}
                    {@const [a, b] = label.includes('_') ? label.split('_') : [label, '']}
                    <button role="menuitem" class:on={a + b === active}>
                        {@render ic(k)}<span>{a}{#if b}<u>{b[0]}</u>{b.slice(1)}{/if}</span>
                    </button>
                {/each}
            </div>
        {/each}
    </div>

    <div class="tip" role="tooltip">
        <p>Add a procedural operation/effect to the active object: &nbsp;<b>Bevel</b></p>
        <p>Generate sloped corners by adding geometry to the mesh's edges or vertices</p>
    </div>

    <div class="activate">
        <h3>Активация Windows</h3>
        <p>Чтобы активировать Windows, перейдите в раздел "Параметры".</p>
    </div>

    <svg class="notes" viewBox="0 0 1920 1080" aria-hidden="true">
        <text x="930" y="174">1. Нажимаем сюда</text>
        <text x="941" y="279">2. После выбираем</text>
        <text x="941" y="338">данный параметр</text>
        <path d="M1319 184 1646 431M1308 342 1464 519"/>
        <circle cx="440" cy="160" r="3"/>
    </svg>
</div>


<style>
    :global(body)   { background: #161616; overflow: hidden; }

    .desktop {
        position: relative;     display: flex;      flex-direction: column;
        height: 100vh;          color: #e0e0e0;     background: #161616;
        font: 10px/14px "DejaVu Sans", sans-serif;
    }
    .desktop *      { box-sizing: border-box; }
    button, input, select {
        margin: 0;      padding: 0;     border: 0;      background: none;
        color: inherit; font: inherit;  appearance: none;   outline: none;
    }
    button          { display: flex; align-items: center; justify-content: center; white-space: nowrap; }
    svg             { display: block; flex: none; }
    .ic             { fill: none; stroke: currentColor; }

    /* window title */
    .title          { display: flex; align-items: center; flex: none; gap: 5px; height: 23px; padding: 0 2px 0 3px; background: #fff; color: #000; font: 11px/16px "Open Sans", sans-serif; }
    .winbtns        { display: flex; margin-left: auto; }
    .winbtns button { width: 46px; height: 23px; }
    .winbtns path   { fill: none; stroke: #000; }

    .topbar         { display: flex; align-items: center; flex: none; height: 26px; padding: 1px 9px 0; background: #1d1d1d; }
    .menus          { display: flex; gap: 15px; }
    .topbar .menus  { margin-left: 10px; }
    .tabs           { display: flex; align-self: flex-end; gap: 2px; margin-left: 24px; height: 20px; color: #989898; }
    .tabs button    { padding: 0 9px; border-radius: 4px 4px 0 0; }
    .tabs .on       { background: #303030; color: #fff; }
    .tabs .plus     { padding: 0 4px; }
    .ids            { display: flex; gap: 6px; margin-left: auto; }
    .id             { position: relative; display: flex; height: 20px; border: 1px solid #3a3a3a; border-radius: 4px; overflow: hidden; }
    .id input       { width: 119px; padding-left: 7px; border-left: 1px solid #3a3a3a; }
    .id .drop       { border: 0; border-radius: 0; width: 31px; height: 18px; }
    .id .pin        { position: absolute; right: 42px; top: 1px; color: #777; }
    .id .x          { width: 19px; color: #555; background: #252525; }
    .lt             { width: 20px; background: #545454; }

    main            { display: flex; flex: 1; gap: 3px; min-height: 0; padding: 1px 1px 0; }
    .left           { display: flex; flex-direction: column; flex: 1; gap: 3px; min-width: 0; }
    .right          { display: flex; flex-direction: column; flex: none; gap: 3px; width: 330px; }
    section         { position: relative; overflow: hidden; border-radius: 5px; }

    .hdr            { position: relative; display: flex; align-items: center; height: 25px; padding: 0 8px; background: #303030; }
    .drop, .dd      { display: flex; align-items: center; height: 20px; border: 1px solid #3d3d3d; border-radius: 4px; background: #282828; }
    .drop           { width: 32px; }
    .dd             { padding: 0 2px 0 4px; gap: 6px; }
    .dd select      { flex: 1; min-width: 0; }
    .mode           { width: 110px; margin: 0 6px; }
    .orient         { width: 80px; gap: 5px; }
    .seg            { display: flex; border-radius: 4px; overflow: hidden; }
    .seg button     { width: 19px; height: 20px; background: #545454; color: #e6e6e6; }
    .seg button + button { border-left: 1px solid #3a3a3a; }
    .seg .on        { background: #4772b3; color: #fff; }
    .seg.dark button, .seg .dk { background: #282828; }
    .seg.dark .lt   { background: #545454; color: #aaa; }
    .seg.dark .rec  { color: #e6e6e6; }
    .seg.dark .on   { background: #4772b3; }
    .seg.dark .wide { width: 33px; }
    .seg .off       { color: #888; }
    .hdr .menus     { margin-left: 15px; }
    .end            { display: flex; align-items: center; gap: 6px; margin-left: auto; }

    /* 3d viewport */
    .view3d         { flex: 1; min-height: 0; }
    .scene          { position: absolute; inset: 0; width: 100%; height: 100%; }
    .mid            { position: absolute; left: 42%; display: flex; gap: 5px; }
    .sub            { height: 26px; padding: 2px 7px 0 44px; background: #323232e0; }
    .sub .seg button { height: 18px; color: #ccc; }
    .sub .seg .on   { color: #fff; }
    .sub .xyz button { width: 16px; }
    .sub .end       { gap: 5px; }
    .sub .opts      { width: 62px; justify-content: space-between; padding: 0 0 0 6px; }
    .sub .off       { color: #999; }

    .tools          { position: absolute; left: 8px; top: 59px; display: flex; flex-direction: column; gap: 6px; }
    .group          { display: flex; flex-direction: column; gap: 1px; border-radius: 4px; overflow: hidden; background: #3c3c3c; }
    .group button   { position: relative; width: 40px; height: 34px; padding-right: 2px; background: #272727; }
    .group svg      { overflow: visible; }
    .group .on      { background: #4772b3; }
    .more::after    { content: ''; position: absolute; right: 2px; bottom: 2px; border: 2px solid; border-color: transparent #aaa #aaa transparent; }

    .info           { position: absolute; left: 66px; top: 59px; line-height: 18px; color: #fff; text-shadow: 1px 1px 1px #000; }
    .axes           { position: absolute; right: 8px; top: 58px; }
    .axes text      { font: 10px "DejaVu Sans", sans-serif; text-anchor: middle; fill: #111; }
    .navbtns        { position: absolute; right: 9px; top: 142px; display: flex; flex-direction: column; gap: 3px; }
    .navbtns button { width: 27px; height: 27px; border-radius: 50%; background: #292929; }
    .flap           { position: absolute; right: 0; top: 64px; width: 9px; height: 16px; border-radius: 4px 0 0 4px; background: #2c2c2c; }

    .timeline       { flex: none; height: 72px; background: #1d1d1d; }
    .timeline .seg  { margin-left: 6px; }
    .timeline .hdr  { padding: 0 7px; }
    .timeline .hdr .menus { margin-left: 10px; gap: 16px; }
    .timeline .seg .txt { width: auto; padding: 0 3px 0 6px; gap: 3px; }
    .timeline .mid  { left: 44%; gap: 1px; margin-left: -4px; }
    .timeline .play button { width: 20px; }
    .num            { height: 18px; text-align: right; }
    .cur            { width: 73px; padding-right: 35px; border-radius: 4px; background: #545454; }
    .range          { display: flex; gap: 1px; border-radius: 4px; overflow: hidden; }
    .range > *      { display: flex; align-items: center; height: 18px; background: #4a4a4a; }
    .range button   { width: 19px; }
    .range label    { justify-content: space-between; width: 86px; padding: 0 13px 0 16px; }
    .range input    { width: 25px; }
    .ruler          { width: 100%; height: 47px; }
    .ruler text     { font: 11px "DejaVu Sans", sans-serif; text-anchor: middle; fill: #999; }
    .ruler .now     { fill: #fff; }

    /* outliner */
    .outliner       { flex: none; height: 310px; background: repeating-linear-gradient(#2b2b2b 0 20px, #282828 20px 40px) 0 27px; }
    .right .hdr     { gap: 6px; background: #2b2b2b; }
    .find           { display: flex; align-items: center; width: 111px; height: 19px; margin-left: 15px; padding-left: 3px; border: 1px solid #3a3a3a; border-radius: 4px; background: #1d1d1d; }
    .find input     { width: 80px; }
    ul              { margin: 2px 0 0; padding: 0; list-style: none; }
    li              { display: flex; align-items: center; height: 20px; padding-right: 12px; color: #c8c8c8; }
    li .end         { color: #e6e6e6; }
    .d0             { padding-left: 23px; gap: 6px; }
    .d1             { padding-left: 25px; gap: 5px; }
    .d2             { padding-left: 1px; gap: 5px; }
    .sel            { background: #334d80; }
    .sel span       { width: 42px; color: #ffaf29; }
    .tw             { width: 9px; font: 8px/8px "DejaVu Sans", sans-serif; color: #ccc; }
    .guide          { width: 1px; height: 10px; margin: 0 9px 0 7px; background: #777; }
    .chip           { padding: 2px; border-radius: 4px; background: #505050; color: #eee; }
    .or             { background: #5d6a86; color: #d58a55; }
    .gr             { background: #2b6070; color: #00d6a3; }
    li input        { width: 11px; height: 11px; border-radius: 1px; background: #e6e6e6; }
    li input::after { content: ''; display: block; width: 4px; height: 7px; margin: 1px 3px; border: solid #222; border-width: 0 2px 2px 0; transform: rotate(40deg); }

    .props          { display: flex; flex-direction: column; flex: 1; background: #303030; }
    .right .props .hdr { background: #303030; }
    .props .find    { margin-left: 66px; width: 110px; }
    .drop.one       { width: 20px; justify-content: center; }
    .body           { display: flex; flex: 1; }
    .ptabs          { width: 28px; padding-top: 10px; background: #1d1d1d; }
    .ptabs button   { width: 28px; height: 36px; align-items: flex-start; color: #ccc; }
    .ptabs button + button { padding-top: 2px; }
    .panel          { flex: 1; padding: 10px 8px 0 9px; }
    .crumb          { display: flex; align-items: center; gap: 8px; height: 16px; padding-left: 1px; }
    .crumb .end     { color: #888; }
    .addmod         { justify-content: space-between; width: 100%; height: 19px; margin-top: 19px; padding: 0 0 0 7px; border-radius: 3px 3px 0 0; background: #415e93; color: #fff; }

    .status         { display: flex; align-items: center; flex: none; height: 20px; padding: 0 9px; background: #1d1d1d; color: #999; }
    .status span    { width: 211px; }
    .status em      { margin-left: auto; font-style: normal; }

    /* windows taskbar */
    .taskbar        { display: flex; flex: none; height: 40px; background: #1c1c1c; color: #fff; font: 12px/18px "Open Sans", sans-serif; }
    .taskbar > button, .apps button { width: 48px; height: 40px; }
    .wsearch        { position: relative; display: flex; align-items: center; gap: 10px; width: 344px; padding-left: 12px; background: #f2f2f2; border-top: 1px solid #ccc; }
    .wsearch input  { width: 230px; color: #333; font: 14px/20px "Open Sans", sans-serif; }
    .wsearch input::placeholder { color: #333; opacity: 1; }
    .art            { position: absolute; right: 0; bottom: 0; }
    .apps           { display: flex; gap: 1px; margin-left: 3px; }
    .apps .run      { background: #484848; border-bottom: 2px solid #76b9ed; }
    .tray           { display: flex; align-items: center; gap: 9px; margin-left: auto; padding-right: 4px; font-size: 11px; }
    .tray time      { text-align: center; width: 60px; }
    .tray span      { margin: 0 3px; }
    .tray time + svg { margin: 0 9px 0 6px; }
    .tray i         { width: 1px; height: 40px; background: #555; }

    /* modifier menu */
    .popup          { position: absolute; right: 10px; top: 451px; display: flex; width: 634px; height: 459px; padding-left: 2px; border: 1px solid #242424; border-radius: 0 0 4px 4px; background: #181818; box-shadow: 0 2px 6px #0006; }
    .popup::before  { content: ''; position: absolute; left: 0; right: 0; top: 30px; height: 1px; background: #333; }
    .col            { width: 151px; }
    .col:first-child { width: 182px; }
    .col:nth-child(2) { width: 156px; }
    .col:nth-child(3) { width: 153px; }
    .col:last-child { width: 130px; }
    h4              { margin: 0 0 17px; padding: 7px 0 0 5px; font: 10px/14px "DejaVu Sans", sans-serif; color: #999; }
    .col button     { justify-content: flex-start; gap: 6px; width: 149px; height: 18px; margin-bottom: 4px; padding-left: 7px; border-radius: 3px; }
    .col .on        { background: #4772b3; color: #fff; }
    u               { text-decoration: underline 1px #999; text-underline-offset: 3px; }

    .tip            { position: absolute; right: 15px; top: 541px; width: 410px; padding: 7px 12px; border: 1px solid #242424; border-radius: 4px; background: #191919; color: #d0d0d0; box-shadow: 0 2px 5px #0008; }
    .tip p          { margin: 0; line-height: 16px; white-space: nowrap; }
    .tip b          { font-weight: 400; color: #8794b8; }
    .tip p + p      { color: #999; }

    .activate       { position: absolute; right: 73px; bottom: 89px; width: 456px; color: #ffffff70; font-family: "Open Sans", sans-serif; pointer-events: none; white-space: nowrap; }
    .activate h3    { margin: 0; font-weight: 400; font-size: 19px; line-height: 26px; }
    .activate p     { margin: 0; font-size: 14px; line-height: 20px; }

    .notes          { position: absolute; inset: 0; width: 100%; height: 100%; pointer-events: none; }
    .notes text     { font: 44px Lato, "Open Sans", sans-serif; fill: #fff; }
    .notes path     { stroke: #fff; stroke-width: 5; stroke-linecap: round; }
    .notes circle   { fill: #fff; }
</style>
